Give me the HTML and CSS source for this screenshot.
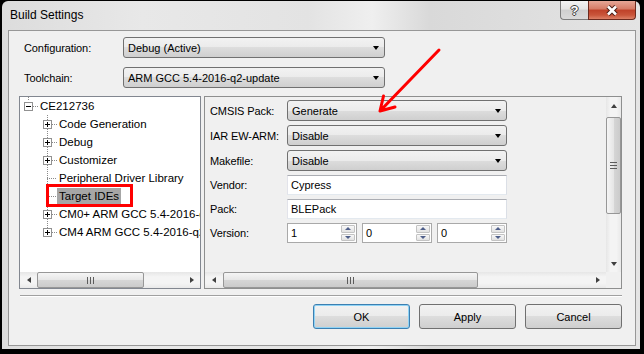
FILE: index.html
```html
<!DOCTYPE html>
<html>
<head>
<meta charset="utf-8">
<title>Build Settings</title>
<link rel="stylesheet" href="styles.css">
</head>
<body>
<div class="window">
  <div class="titlebar">
    <span class="title">Build Settings</span>
    <div class="caption">
      <span class="help">?</span>
      <span class="close"><svg width="14" height="11" viewBox="0 0 14 11"><path d="M3 1.5 L11 9.5 M11 1.5 L3 9.5" stroke="#4a1e16" stroke-width="4.6" fill="none"/><path d="M3 1.5 L11 9.5 M11 1.5 L3 9.5" stroke="#fff" stroke-width="2.6" fill="none"/></svg></span>
    </div>
  </div>

  <div class="client">
    <div class="field-row">
      <span class="lbl">Configuration:</span>
      <div class="combo">Debug (Active)<i class="dd"></i></div>
    </div>
    <div class="field-row">
      <span class="lbl">Toolchain:</span>
      <div class="combo">ARM GCC 5.4-2016-q2-update<i class="dd"></i></div>
    </div>

    <div class="panes">
      <div class="tree">
        <div class="tree-view">
          <div class="node root"><span class="exp minus"></span><span class="hline"></span><span class="txt">CE212736</span></div>
          <div class="kids">
            <div class="node"><span class="exp plus"></span><span class="hline"></span><span class="txt">Code Generation</span></div>
            <div class="node"><span class="exp plus"></span><span class="hline"></span><span class="txt">Debug</span></div>
            <div class="node"><span class="exp plus"></span><span class="hline"></span><span class="txt">Customizer</span></div>
            <div class="node leaf"><span class="hline"></span><span class="txt">Peripheral Driver Library</span></div>
            <div class="node leaf"><span class="hline"></span><span class="txt sel">Target IDEs</span></div>
            <div class="node"><span class="exp plus"></span><span class="hline"></span><span class="txt">CM0+ ARM GCC 5.4-2016-q2-update</span></div>
            <div class="node"><span class="exp plus"></span><span class="hline"></span><span class="txt">CM4 ARM GCC 5.4-2016-q2-update</span></div>
          </div>
        </div>
        <div class="hscroll">
          <span class="arr"><i class="tri-l"></i></span>
          <div class="track"><span class="thumb" style="width:107px"><i class="grip-v"></i></span></div>
          <span class="arr"><i class="tri-r"></i></span>
        </div>
      </div>

      <div class="props">
        <div class="props-body">
          <div class="form">
            <span class="lbl">CMSIS Pack:</span>
            <div class="combo">Generate<i class="dd"></i></div>
            <span class="lbl">IAR EW-ARM:</span>
            <div class="combo">Disable<i class="dd"></i></div>
            <span class="lbl">Makefile:</span>
            <div class="combo">Disable<i class="dd"></i></div>
            <span class="lbl">Vendor:</span>
            <div class="text">Cypress</div>
            <span class="lbl">Pack:</span>
            <div class="text">BLEPack</div>
            <span class="lbl">Version:</span>
            <div class="spins">
              <div class="spin"><span class="val">1</span><span class="ud"><i class="up"></i><i class="down"></i></span></div>
              <div class="spin"><span class="val">0</span><span class="ud"><i class="up"></i><i class="down"></i></span></div>
              <div class="spin"><span class="val">0</span><span class="ud"><i class="up"></i><i class="down"></i></span></div>
            </div>
          </div>
          <div class="vscroll">
            <span class="arr"><i class="tri-u"></i></span>
            <div class="track"><span class="thumb" style="height:97px"><i class="grip-h"></i></span></div>
            <span class="arr"><i class="tri-d"></i></span>
          </div>
        </div>
        <div class="props-foot">
          <div class="hscroll">
            <span class="arr"><i class="tri-l"></i></span>
            <div class="track"><span class="thumb wide" style="width:255px"><i class="grip-v"></i></span></div>
            <span class="arr"><i class="tri-r"></i></span>
          </div>
          <div class="corner"></div>
        </div>
      </div>
    </div>

    <div class="sep"></div>

    <div class="buttons">
      <span class="btn default">OK</span>
      <span class="btn">Apply</span>
      <span class="btn">Cancel</span>
    </div>
  </div>
</div>

<svg class="marks" width="644" height="354" viewBox="0 0 644 354">
  <rect x="47.5" y="185.5" width="84" height="20" fill="none" stroke="#f00" stroke-width="3"/>
  <path d="M439 50 L380 111 M380 111 L395 107 M380 111 L383.5 96" stroke="#f00" stroke-width="3" fill="none" stroke-linecap="round" stroke-linejoin="round"/>
</svg>
</body>
</html>
```

FILE: styles.css
```css
html{background:#000; overflow:hidden;}
body{margin:0; background:#000; font-family:"Liberation Sans", Arial, sans-serif; font-size:11px; color:#000;}

/* window frame */
.window{box-sizing:border-box; width:638px; height:348px; margin:1px 0 0 2px; padding:0 4px 3px 6px; border-radius:6px 6px 0 0;
  background:linear-gradient(90deg,#dcdcdc 0%,#e8e8e8 22%,#e3e3e3 48%,#efefef 58%,#d9d9d9 67%,#e4e4e4 100%);
  display:flex; flex-direction:column;}
.titlebar{flex:none; height:29px; display:flex; justify-content:space-between; align-items:flex-start;}
.title{font-size:12px; padding:7px 0 0 2px;}
.caption{display:flex; height:19px;}
.help{width:28px; box-sizing:border-box; border:1px solid #7c7c7c; border-top:0; border-right:0; border-radius:0 0 0 4px;
  background:linear-gradient(#f3f3f3,#e4e4e4 45%,#cfcfcf 50%,#dadada);
  display:flex; align-items:center; justify-content:center;
  color:#fff; font-size:13px; font-weight:bold;
  text-shadow:1px 0 0 #3c3c3c,-1px 0 0 #3c3c3c,0 1px 0 #3c3c3c,0 -1px 0 #3c3c3c;}
.close{width:48px; box-sizing:border-box; border:1px solid #6b2a1e; border-top:0; border-radius:0 0 4px 0;
  background:linear-gradient(#e6a797,#d57a65 45%,#bf4129 50%,#c9553a 78%,#dd8167);
  display:flex; align-items:center; justify-content:center;}

/* client area */
.client{flex:1; box-sizing:border-box; border:1px solid #979797; background:#f0f0f0; padding:6px 13px 0 10px; display:flex; flex-direction:column;}
.field-row{display:flex; align-items:center; height:21px;}
.field-row + .field-row{margin-top:9px;}
.field-row .lbl{width:104px; box-sizing:border-box; padding-left:5px;}
.field-row .combo{width:262px;}
.lbl{letter-spacing:-0.1px;}

.combo{box-sizing:border-box; height:21px; border:1px solid #707070; border-radius:3px; padding-left:4px;
  background:linear-gradient(#f2f2f2,#ebebeb 50%,#dddddd 50%,#cfcfcf);
  display:flex; align-items:center; justify-content:space-between;}
.dd{width:0; height:0; margin-right:5px; border-left:3px solid transparent; border-right:3px solid transparent; border-top:4px solid #000;}

.panes{display:flex; gap:3px; height:193px; margin-top:8px;}

/* tree */
.tree{width:182px; box-sizing:border-box; border:1px solid #828790; background:#fff; display:flex; flex-direction:column;}
.tree-view{flex:1; overflow:hidden; white-space:nowrap; font-size:11.5px;}
.node{height:18px; display:flex; align-items:center;}
.root{padding-left:4px; background:repeating-linear-gradient(#8a8a8a 0 1px,transparent 1px 2px) 8px 0 / 1px 4px no-repeat;}
.kids{margin-left:23px;}
.kids .node{background:repeating-linear-gradient(#8a8a8a 0 1px,transparent 1px 2px) 4px 0 / 1px 100% no-repeat;}
.kids .node:last-child{background-size:1px 9px;}
.exp{flex:none; width:9px; height:9px; box-sizing:border-box; border:1px solid #919191; background:#fff;}
.minus{background:linear-gradient(#000,#000) center / 5px 1px no-repeat, #fff;}
.plus{background:linear-gradient(#000,#000) center / 5px 1px no-repeat, linear-gradient(#000,#000) center / 1px 5px no-repeat, #fff;}
.hline{flex:none; width:5px; height:1px; background:repeating-linear-gradient(90deg,#8a8a8a 0 1px,transparent 1px 2px);}
.leaf .hline{width:10px; margin-left:4px;}
.txt{padding:0 2px; line-height:17px;}
.txt.sel{background:#a6a6a6;}

/* property pane */
.props{flex:1; border:1px solid #8e8f8f; display:flex; flex-direction:column; background:#f0f0f0; min-width:0;}
.props-body{flex:1; display:flex; min-height:0;}
.form{flex:1; padding:3px 0 0 5px; display:grid; grid-template-columns:77px 220px; row-gap:4px; align-content:start; align-items:center; overflow:hidden;}
.text{box-sizing:border-box; height:20px; border:1px solid; border-color:#abadb3 #dbdfe6 #e3e9ef #e2e3ea; background:#fff; padding-left:3px; line-height:18px;}
.spins{display:flex; gap:5px;}
.spin{width:70px; height:20px; box-sizing:border-box; border:1px solid #a9a9a9; background:#fff; display:flex;}
.spin .val{flex:1; padding-left:3px; line-height:18px;}
.ud{width:14px; display:flex; flex-direction:column; gap:1px; padding:1px 1px 1px 0;}
.ud i{flex:1; border:1px solid #c3c3c3; border-radius:1px; background:linear-gradient(#f8f8f8,#e2e2e2); display:flex; align-items:center; justify-content:center;}
.ud i::before{content:""; border-left:3px solid transparent; border-right:3px solid transparent;}
.ud .up::before{border-bottom:3px solid #4f5f8a;}
.ud .down::before{border-top:3px solid #4f5f8a;}

/* scrollbars */
.hscroll{display:flex; height:16px; background:linear-gradient(#e6e6e6,#f4f4f4 30%,#f4f4f4 70%,#e9e9e9);}
.vscroll{width:15px; display:flex; flex-direction:column; background:linear-gradient(90deg,#e6e6e6,#f4f4f4 30%,#f4f4f4 70%,#e9e9e9);}
.arr{flex:none; width:17px; display:flex; align-items:center; justify-content:center;}
.vscroll .arr{width:auto; height:17px;}
.hscroll .track{flex:1; display:flex;}
.vscroll .track{flex:1; display:flex; flex-direction:column; padding-top:3px;}
.thumb{box-sizing:border-box; border:1px solid #979797; border-radius:2px; display:flex; align-items:center; justify-content:center;}
.hscroll .thumb{background:linear-gradient(#f5f5f5,#e6e6e6 50%,#d6d6d6 51%,#cbcbcb);}
.hscroll .thumb.wide{margin-left:1px;}
.vscroll .thumb{background:linear-gradient(90deg,#f5f5f5,#e6e6e6 50%,#d6d6d6 51%,#cbcbcb);}
.grip-v{width:7px; height:7px; background:repeating-linear-gradient(90deg,#5c5c5c 0 1px,transparent 1px 3px);}
.grip-h{width:7px; height:7px; background:repeating-linear-gradient(#5c5c5c 0 1px,transparent 1px 3px);}
.tri-l{border-top:3px solid transparent; border-bottom:3px solid transparent; border-right:4px solid #404040;}
.tri-r{border-top:3px solid transparent; border-bottom:3px solid transparent; border-left:4px solid #404040;}
.tri-u{border-left:3px solid transparent; border-right:3px solid transparent; border-bottom:4px solid #404040;}
.tri-d{border-left:3px solid transparent; border-right:3px solid transparent; border-top:4px solid #404040;}
.props-foot{display:flex; height:16px;}
.props-foot .hscroll{flex:1;}
.corner{width:15px; background:#f0f0f0;}

/* bottom */
.sep{margin:6px 0 0 1px; border-top:1px solid #a0a0a0; border-bottom:1px solid #fff;}
.buttons{display:flex; justify-content:flex-end; gap:9px; margin-top:7px;}
.btn{width:97px; height:25px; box-sizing:border-box; border:1px solid #707070; border-radius:3px;
  background:linear-gradient(#f2f2f2,#ebebeb 50%,#dddddd 50%,#cfcfcf);
  display:flex; align-items:center; justify-content:center;}
.btn.default{border-color:#3c7fb1; box-shadow:inset 0 0 0 1px #8fd3f5;}

.marks{position:absolute; left:0; top:0; pointer-events:none;}
```
